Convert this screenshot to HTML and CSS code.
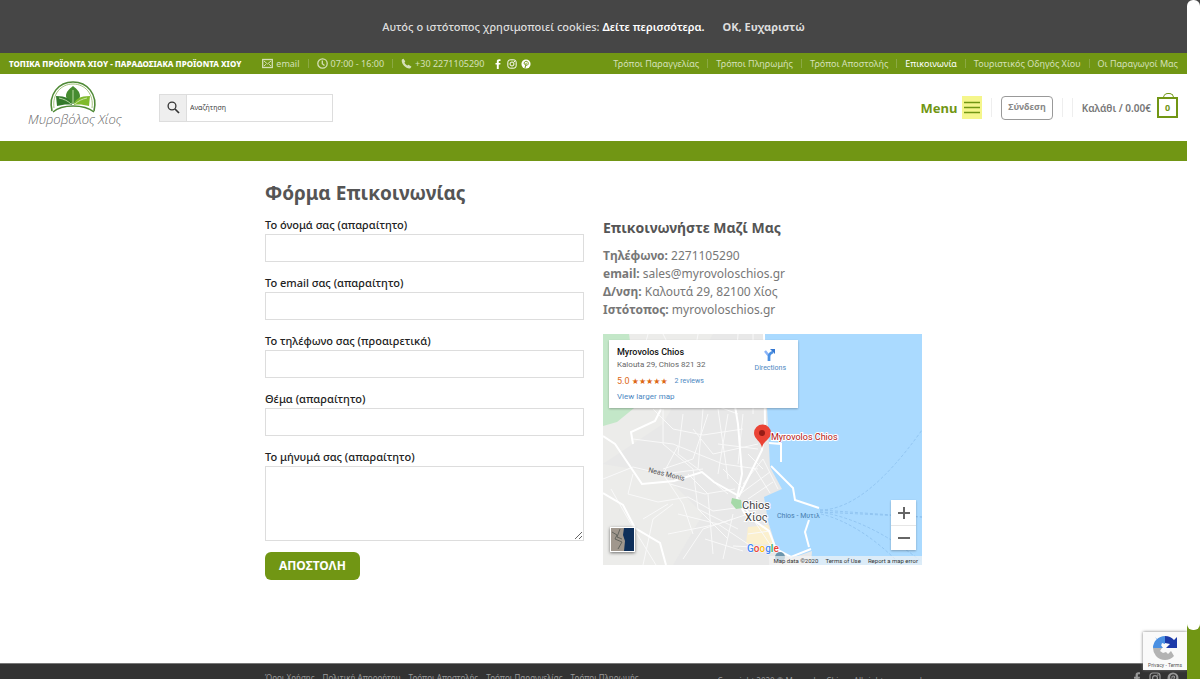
FILE: index.html
```html
<!DOCTYPE html>
<html lang="el">
<head>
<meta charset="utf-8">
<meta name="viewport" content="width=device-width, initial-scale=1">
<title>Φόρμα Επικοινωνίας</title>
<link rel="stylesheet" href="styles.css">
</head>
<body>
<svg class="defs" width="0" height="0" aria-hidden="true">
  <symbol id="facebook" viewBox="0 0 12 12"><path d="M4.6 12V6.7H3V4.7h1.6V3.1C4.600 1.200 5.600.300 7.300.300H9v2H7.900c-.8 0-1 .4-1 1v1.400H9L8.700 6.700H6.900V12z" fill="currentColor"/></symbol>
  <symbol id="instagram" viewBox="0 0 12 12"><rect x="1" y="1" width="10" height="10" rx="2.800" fill="none" stroke="currentColor" stroke-width="1.200"/><circle cx="6" cy="6" r="2.400" fill="none" stroke="currentColor" stroke-width="1.200"/><circle cx="8.900" cy="3.100" r=".8" fill="currentColor"/></symbol>
  <symbol id="pinterest" viewBox="0 0 12 12"><circle cx="6" cy="6" r="5.500" fill="currentColor"/><path d="M4.200 6.600C2.900 4.200 4.600 2.800 6.300 2.800c3.400 0 2.800 4.800.5 4.800-.7 0-1.100-.5-1.100-.8M6.300 4.600L4.800 11" fill="none" stroke="var(--bar)" stroke-width="1.200"/></symbol>
</svg>
<div class="page">
  <div class="site">
    <div class="cookies">
      <p>Αυτός ο ιστότοπος χρησιμοποιεί cookies: <a href="#more">Δείτε περισσότερα.</a></p>
      <button class="cookie-ok">OK, Ευχαριστώ</button>
    </div>
    <div class="topbar">
      <div class="top-group">
        <strong>ΤΟΠΙΚΑ ΠΡΟΪΟΝΤΑ ΧΙΟΥ - ΠΑΡΑΔΟΣΙΑΚΑ ΠΡΟΪΟΝΤΑ ΧΙΟΥ</strong>
        <ul class="contacts">
          <li><a href="#email"><svg width="11" height="11" viewBox="0 0 11 11" fill="none" stroke="currentColor"><rect x=".7" y="1.500" width="9.600" height="8" stroke-width="1.300"/><path d="M2 3l3.500 3L9 3M2 8l2.200-2M9 8L6.800 6"/></svg>email</a></li>
          <li><span><svg width="11" height="11" viewBox="0 0 11 11" fill="none" stroke="currentColor" stroke-width="1.300"><circle cx="5.500" cy="5.500" r="4.700"/><path d="M5.300 2.500v3.200l2.200 1.800"/></svg>07:00 - 16:00</span></li>
          <li><a href="#tel"><svg width="11" height="11" viewBox="0 0 11 11" fill="currentColor"><path d="M2.500.7L4.200 3.200c.2.400-.7 1-.7 1.400.4 1.200 1.700 2.500 2.900 3 .4.100 1-.9 1.500-.7l2.400 1.600c.3.300-.6 2-1.800 2C4.500 10.300.500 6.200.700 2.300.700 1.200 2.200.400 2.500.700z"/></svg>+30 2271105290</a></li>
        </ul>
        <div class="social">
          <a href="#fb" aria-label="Facebook"><svg><use href="#facebook"/></svg></a>
          <a href="#ig" aria-label="Instagram"><svg><use href="#instagram"/></svg></a>
          <a href="#pin" aria-label="Pinterest"><svg><use href="#pinterest"/></svg></a>
        </div>
      </div>
      <nav><ul class="toplinks">
        <li><a href="#a">Τρόποι Παραγγελίας</a></li>
        <li><a href="#b">Τρόποι Πληρωμής</a></li>
        <li><a href="#c">Τρόποι Αποστολής</a></li>
        <li><a class="active" href="#d">Επικοινωνία</a></li>
        <li><a href="#e">Τουριστικός Οδηγός Χίου</a></li>
        <li><a href="#f">Οι Παραγωγοί Μας</a></li>
      </ul></nav>
    </div>
    <header class="header">
      <div class="brand">
        <a class="logo" href="#home" aria-label="Μυροβόλος Χίος">
          <svg width="98" height="54" viewBox="0 0 98 54">
            <g fill="none" stroke="#4f8a36"><path d="M26 33C22 16 33 4 47 4s25 12 21 29" stroke-width="1.600"/><path d="M28 30C26 16 35 6 47 6s21 10 19 24" stroke-width=".8" stroke="#8bb45c"/><path d="M27 34c9-8 31-8 41 0" stroke-width="1.500"/></g>
            <path d="M47 8c-4 3-7 6-7 10 0 3 3 5 7 8 4-3 7-5 7-8 0-4-3-7-7-10z" fill="#468b30"/>
            <path d="M30 18c10 0 15 3 16 9-5-1-10 0-15 1z" fill="#347a2c"/>
            <path d="M64 18c-10 0-15 3-16 9 5-1 10 0 15 1z" fill="#7fba2c"/>
            <path d="M47 12v13M33 20c5 1 9 3 12 6M61 20c-5 1-9 3-12 6" stroke="#d9eec0" stroke-width=".8" fill="none"/>
            <text x="2" y="46" class="logo-text">Μυροβόλος Χίος</text>
          </svg>
        </a>
        <form class="search" role="search">
          <button type="button" aria-label="Αναζήτηση"><svg width="13" height="13" viewBox="0 0 13 13" fill="none" stroke="#333"><circle cx="5" cy="5" r="3.900" stroke-width="1.300"/><path d="M8 8l4 4" stroke-width="1.700"/></svg></button>
          <input type="search" placeholder="Αναζήτηση" aria-label="Αναζήτηση">
        </form>
      </div>
      <div class="tools">
        <button class="menu">Menu <span class="burger"><svg width="16" height="13" viewBox="0 0 16 13" stroke="#719614" stroke-width="1.500"><path d="M0 1.500h16M0 6.500h16M0 11.500h16"/></svg></span></button>
        <i class="rule"></i>
        <a class="login" href="#login">Σύνδεση</a>
        <i class="rule"></i><i class="rule second"></i>
        <a class="cart" href="#cart">Καλάθι / 0.00€ <span class="bag">0</span></a>
      </div>
    </header>
    <div class="band"></div>
    <main class="main">
      <h1>Φόρμα Επικοινωνίας</h1>
      <div class="columns">
        <form class="form">
          <label for="name">Το όνομά σας (απαραίτητο)</label><input id="name" type="text">
          <label for="mail">Το email σας (απαραίτητο)</label><input id="mail" type="email">
          <label for="phone">Το τηλέφωνο σας (προαιρετικά)</label><input id="phone" type="tel">
          <label for="subject">Θέμα (απαραίτητο)</label><input id="subject" type="text">
          <label for="message">Το μήνυμά σας (απαραίτητο)</label><textarea id="message"></textarea>
          <button class="submit" type="button">ΑΠΟΣΤΟΛΗ</button>
        </form>
        <section class="info">
          <h2>Επικοινωνήστε Μαζί Μας</h2>
          <p><b>Τηλέφωνο:</b> 2271105290<br><b>email:</b> sales@myrovoloschios.gr<br><b>Δ/νση:</b> Καλουτά 29, 82100 Χίος<br><b>Ιστότοπος:</b> myrovoloschios.gr</p>
          <div class="map">
            <svg class="map-art" viewBox="0 0 319 231" preserveAspectRatio="xMidYMid slice">
              <rect width="319" height="231" fill="#e8e8e8"/>
              <path d="M0 0h110L60 90 0 130zM0 130l60 10 40 40-30 51H0z" fill="#ececea"/>
              <path d="M0 0h26l10 70-22 18L0 92z" fill="#c3e7c8"/>
              <path d="M160 0H319V231H208l1-14-20 7-15-8-9-29-4-24 18-8-12-22-1-20-2-40-4-20z" fill="#aadaff"/>
              <path d="M145 193l20-2 6 20-28-1z" fill="#fbf0cf"/>
              <g class="minor"><path d="M45 0l-8 30M60 0l20 40M95 0l-10 60M135 0l-4 60M150 0v80M50 75l20 20 30 6 40-6M30 105l40 5 50 20 35 5M60 75v35l30 25 5 40 30 30M80 80l-5 40 20 15M100 75l-5 60 30 25M115 75l10 70M0 145l30-12 30 7 40-5M30 140l-5 20 30 8 30-5 25 14 30-4M60 140l20 30 10 30M85 140l20 20 5 60M70 170l-20 15-10 46M75 180l40 10 30-10M65 200l50-10 30 20M80 225l20-30 30-10M130 180l-10 45M145 120l15 15M140 150l20-25M137 160l30-22M145 165l25-17M160 125l15 30M152 135l15 24M115 110l40 5M90 95l20 25 45-10M95 65l40 15M150 185l20 30M145 200l22-3M130 212l40 2"/><path d="M105 80l-15 45-30 10M125 80l-10 60M140 80l-5 50M67 150l35 10 30-5M75 112l-15 28M95 175l40 20M120 135l20 20M102 205l38 12M8 155l20 35 25 41M40 185l25-15"/></g>
              <g class="major"><path d="M0 102l12 8 27 40 32-3 28-9 12 10 25 14 23-46 3-23-1-93M0 159l20 12 12 23 25 15 6 22M130 60l5 30 4 50-5 24 12 15M134 166l8 14 24 17 7 18 15 8 20-8M58 75l-6 12-24 11 2 12"/><path d="M166 109l12 1v18M168 132l22 22 2 12 24 8M206 213l-4-15 4-12"/></g>
              <path d="M129 164l9 2 2 8-7 1-5-6z" fill="#a5d9a8"/>
              <circle cx="177" cy="223" r="5" fill="#6b95ad"/>
              <g fill="none" stroke="#86bceb" stroke-width=".7" stroke-dasharray="3 2"><path d="M217 176q45 0 102-80M217 176l102 7M217 178l102 5M217 178q50 8 102 50M218 180q40 10 80 51"/></g>
              <path d="M159 114c-1-7-8-9-8-15a8 8 0 0 1 17 0c0 6-8 8-9 15z" fill="#ea4335"/><circle cx="159" cy="99" r="3" fill="#971c16"/>
              <text x="168" y="106" class="place">Myrovolos Chios</text><text x="139" y="175" class="city">Chios</text><text x="142" y="187" class="city">Χίος</text><text x="174" y="184" class="harbour">Chios - Μυτιλ</text><text x="45" y="138" class="street" transform="rotate(14 45 138)">Neas Monis</text>
              <text x="144" y="218" class="google"><tspan fill="#4285f4">G</tspan><tspan fill="#ea4335">o</tspan><tspan fill="#fbbc05">o</tspan><tspan fill="#4285f4">g</tspan><tspan fill="#34a853">l</tspan><tspan fill="#ea4335">e</tspan></text>
            </svg>
            <div class="place-card">
              <div><strong>Myrovolos Chios</strong><span class="address">Kalouta 29, Chios 821 32</span><span class="rating"><b>5.0 <span class="stars">★★★★★</span></b><a href="#reviews">2 reviews</a></span><a class="larger" href="#larger">View larger map</a></div>
              <a class="directions" href="#directions"><svg width="14" height="14" viewBox="0 0 14 14"><path d="M6 13V8L2 3" fill="none" stroke="#8ab4f8" stroke-width="2.500"/><path d="M6 13V9c0-3 1-4 4-5" fill="none" stroke="#4a90e2" stroke-width="2.500"/><path d="M7 1h5v5z" fill="#3477d1"/></svg>Directions</a>
            </div>
            <button class="satellite" aria-label="Satellite"><svg width="23" height="23" viewBox="0 0 23 23"><path d="M0 0h23v23H0z" fill="#0e2f5a"/><path d="M0 0h13l-1 7 2 6-1 10H0z" fill="#a0978d"/><path d="M1 4l5 3-2 4 7 3-4 7M9 1l-3 8 5 2" stroke="#62645d" fill="none"/></svg></button>
            <div class="zoom"><button aria-label="Zoom in"><svg width="12" height="12" viewBox="0 0 12 12"><path d="M6 0v12M0 6h12"/></svg></button><button aria-label="Zoom out"><svg width="12" height="12" viewBox="0 0 12 12"><path d="M0 6h12"/></svg></button></div>
            <div class="credits"><span>Map data ©2020</span><a href="#terms">Terms of Use</a><a href="#report">Report a map error</a></div>
          </div>
        </section>
      </div>
    </main>
    <footer class="footer">
      <div class="footer-inner"><nav><a href="#1">Όροι Χρήσης</a><a href="#2">Πολιτική Απορρήτου</a><a href="#3">Τρόποι Αποστολής</a><a href="#4">Τρόποι Παραγγελίας</a><a href="#5">Τρόποι Πληρωμής</a></nav><p>Copyright 2020 © Myrovolos Chios - All rights reserved</p></div>
      <div class="footer-social"><svg><use href="#facebook"/></svg><svg><use href="#instagram"/></svg><svg><use href="#pinterest"/></svg></div>
    </footer>
    <aside class="captcha"><svg width="26" height="26" viewBox="0 0 26 26"><path d="M1 13A12 12 0 0 1 13 1v8l-3-1-1 3z" fill="#4a90e2"/><path d="M3 2l4 4-6 7h10z" fill="#4a90e2"/><path d="M13 1a12 12 0 0 1 9 4l3-3v11H14l4-4-5-1z" fill="#1c3aa9"/><path d="M1 13h9l-2 3 3 2 3-1 2 2 3-3 3 5A12 12 0 0 1 4 21 12 12 0 0 1 1 13z" fill="#b3b3b3"/></svg><span>Privacy - Terms</span></aside>
  </div>
  <div class="scroll" aria-hidden="true"><div class="thumb"></div></div>
</div>
</body>
</html>
```
FILE: styles.css
```css
* { box-sizing: border-box; }
body { margin: 0; overflow: hidden; color: #777; background: #fff; font: 12px/18px "Noto Sans", "Open Sans", sans-serif; }
a { color: inherit; text-decoration: none; }
button { border: 0; padding: 0; background: none; font: inherit; cursor: pointer; }
input, textarea { font: inherit; }
ul { display: flex; list-style: none; margin: 0; padding: 0; }
p, h1, h2 { margin: 0; }
svg { display: block; flex: none; }
.defs { position: absolute; }
.page { display: flex; height: 100vh; }
.site { position: relative; display: flex; flex: 1; flex-direction: column; min-width: 0; overflow: hidden; }
.cookies { display: flex; flex: none; align-items: center; justify-content: center; gap: 18px; height: 53px; color: #ddd; background: #464646; font-size: 11px; font-weight: 500; }
.cookies a { color: #fff; font-weight: 600; }
.cookie-ok { color: #ddd; font-weight: 700; }
.topbar { --bar: #719614; display: flex; flex: none; align-items: center; justify-content: space-between; height: 21px; padding: 0 9px; color: #d5e0b9; background: #719614; font-size: 9px; }
.top-group { display: flex; align-items: center; }
.top-group strong { color: #fff; font-size: 8px; font-weight: 800; }
.topbar li { display: flex; align-items: center; }
.topbar li + li::before { content: ""; width: 1px; height: 9px; margin: 0 8px; background: #8ba943; }
.contacts { margin-left: 21px; }
.contacts a, .contacts span { display: flex; align-items: center; gap: 3px; }
.social { display: flex; gap: 4px; margin-left: 9px; color: #fff; }
.social svg { width: 10px; height: 10px; }
.toplinks .active { color: #fff; }
.header { display: flex; flex: none; align-items: center; justify-content: space-between; height: 67px; padding: 0 9px 0 26px; }
.brand, .tools { display: flex; align-items: center; }
.logo { margin-top: -6px; }
.logo-text { font: italic 300 13px "Open Sans", sans-serif; fill: #666; }
.search { display: flex; width: 174px; height: 28px; margin-left: 35px; border: 1px solid #ddd; }
.search button { display: grid; place-items: center; width: 26px; background: #eee; }
.search input { flex: 1; min-width: 0; padding: 0 3px; border: 0; border-left: 1px solid #ddd; font-size: 7px; }
.search input::placeholder { color: #444; opacity: 1; }
.menu { display: flex; align-items: center; gap: 5px; color: #719614; font-size: 13px; font-weight: 700; }
.burger { display: grid; place-items: center; width: 20px; height: 23px; background: #f5f68b; }
.rule { width: 1px; height: 19px; margin: 0 9px; background: #eee; }
.second { margin: 0 9px 0 0; }
.login { padding: 2px 6px 4px; border: 1px solid #999; border-radius: 4px; color: #888; font-size: 9px; font-weight: 700; line-height: 16px; }
.cart { display: flex; align-items: center; gap: 6px; color: #777; font-size: 10px; font-weight: 600; }
.bag { position: relative; display: grid; place-items: center; width: 21px; height: 21px; border: 2px solid #719614; color: #719614; font-size: 9px; font-weight: 700; }
.bag::before { content: ""; position: absolute; top: -6px; left: 4px; width: 9px; height: 5px; border: 1px solid #719614; border-bottom: 0; border-radius: 5px 5px 0 0; }
.band { flex: none; height: 20px; background: #719614; }
.main { flex: 1; width: 100%; max-width: 675px; min-height: 0; margin: 0 auto; padding: 18px 9px 0; }
h1 { color: #555; font-size: 19px; line-height: 28px; }
.columns { display: grid; grid-template-columns: 1fr 1fr; gap: 19px; margin-top: 9px; }
.form { display: flex; flex-direction: column; }
.form label { color: #222; font-size: 11px; font-weight: 500; line-height: 18px; }
.form input, .form textarea { width: 100%; margin: 0 0 12px; border: 1px solid #ddd; background: #fff; }
.form input { height: 28px; }
.form textarea { height: 75px; margin-bottom: 11px; }
.submit { align-self: flex-start; height: 28px; padding: 0 14px; border-radius: 6px; color: #fff; background: #719614; font-size: 12px; font-weight: 700; }
h2 { margin: 2px 0 9px; color: #555; font-size: 14px; line-height: 20px; }
.info p { margin-bottom: 15px; }
.map { position: relative; height: 231px; overflow: hidden; font: 7px/10px Roboto, sans-serif; }
.map-art { width: 100%; height: 100%; }
.minor { fill: none; stroke: #f9f9f9; stroke-width: 1; }
.major { fill: none; stroke: #fff; stroke-width: 2; }
.place { font: 9px Roboto, sans-serif; fill: #b31412; stroke: #fff; stroke-width: 2; paint-order: stroke; }
.city { font: 11px Roboto, sans-serif; fill: #444; stroke: #fff; stroke-width: 2; paint-order: stroke; }
.harbour { font: 7px Roboto, sans-serif; fill: #477eb0; }
.street { font: 7px Roboto, sans-serif; fill: #555; }
.google { font: 500 10px Roboto, sans-serif; stroke: #fff; stroke-width: 1; paint-order: stroke; }
.place-card { position: absolute; top: 6px; left: 6px; display: flex; justify-content: space-between; width: 189px; height: 68px; padding: 6px 12px 3px 8px; background: #fff; box-shadow: 0 1px 2px #0004; color: #666; }
.place-card strong, .address { display: block; }
.place-card strong { color: #111; font-size: 9px; font-weight: 500; line-height: 12px; }
.address { font-size: 8px; line-height: 14px; }
.place-card a { color: #4b87bf; }
.larger { display: block; font-size: 8px; line-height: 14px; }
.rating { display: flex; gap: 7px; line-height: 18px; }
.rating b { color: #dd6815; font-size: 9px; font-weight: 400; }
.stars { font: 8px "DejaVu Sans", sans-serif; }
.directions { display: flex; flex-direction: column; align-items: center; padding-top: 2px; line-height: 12px; }
.satellite { position: absolute; bottom: 13px; left: 7px; border: 1px solid #fff; box-shadow: 0 1px 3px #0008; }
.zoom { position: absolute; right: 6px; bottom: 15px; width: 25px; background: #fff; box-shadow: 0 1px 2px #0004; }
.zoom button { display: grid; place-items: center; width: 25px; height: 25px; }
.zoom button + button { border-top: 1px solid #e6e6e6; }
.zoom path { stroke: #666; stroke-width: 2; }
.credits { position: absolute; right: 0; bottom: 0; display: flex; gap: 7px; padding: 0 4px; background: #f5f5f5aa; color: #333; font-size: 6px; line-height: 9px; }
.footer { --bar: #333; position: relative; flex: none; height: 16px; overflow: hidden; border-top: 1px solid #777; color: #999; background: #333; font-size: 8px; }
.footer-inner { display: flex; justify-content: space-between; max-width: 675px; margin: 0 auto; padding: 5px 9px 0; }
.footer nav { display: flex; gap: 8px; }
.footer-inner p { padding-top: 3px; }
.footer-social { position: absolute; top: 8px; right: 8px; display: flex; gap: 6px; }
.footer-social svg { width: 12px; height: 12px; }
.captcha { position: absolute; right: 0; bottom: 9px; display: flex; flex-direction: column; align-items: center; width: 44px; height: 38px; padding-top: 3px; background: #fafafa; box-shadow: 0 0 3px #777; color: #555; font: 5px/8px Roboto, sans-serif; }
.scroll { flex: none; width: 13px; background: linear-gradient(#464646 53px, #719614 53px); }
.thumb { height: 630px; border-radius: 6px; background: #fff; }
```
